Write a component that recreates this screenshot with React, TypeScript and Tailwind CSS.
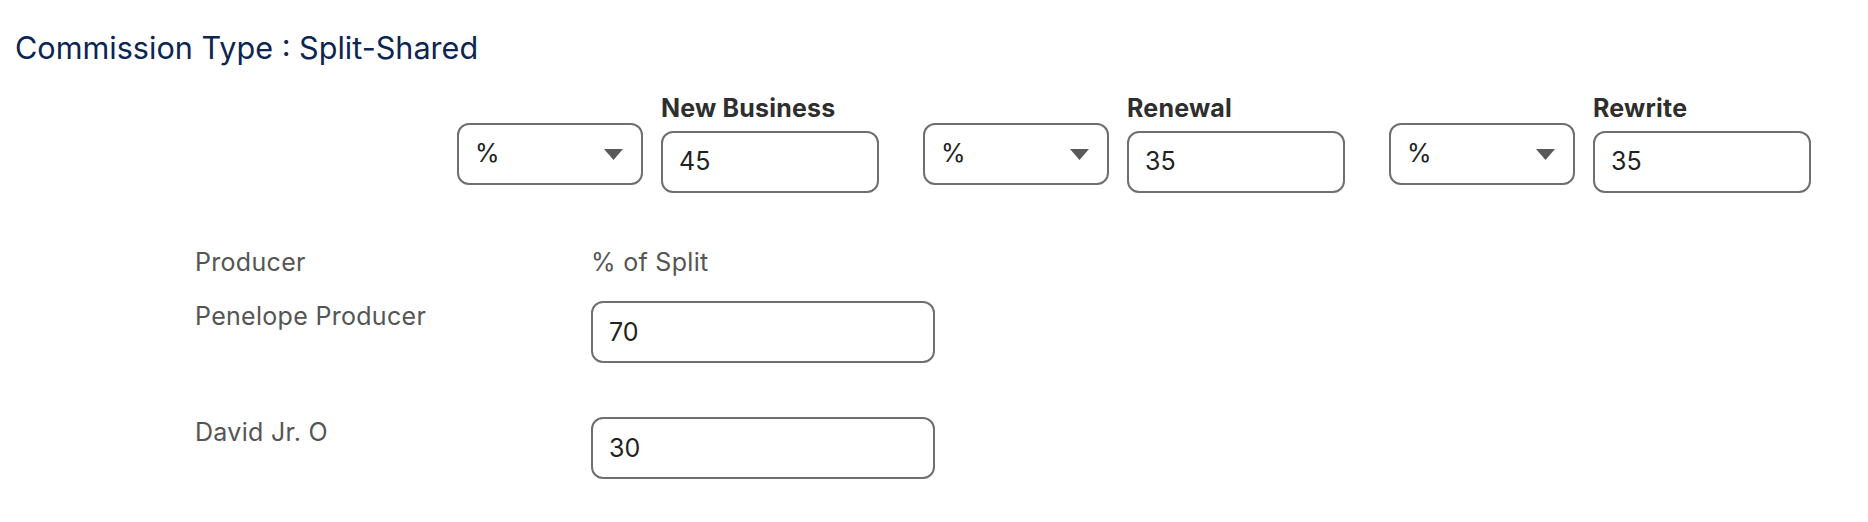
import React from "react";

function Caret() {
  return (
    <svg width="19" height="11" viewBox="0 0 19 11" aria-hidden="true">
      <path d="M0 0 H19 L9.5 11 Z" fill="#595959" />
    </svg>
  );
}

function Group({ label, value }: { label: string; value: string }) {
  return (
    <div className="flex items-end gap-[18px]">
      <div className="mb-[8px] flex h-[62px] w-[186px] items-center justify-between rounded-[12px] border-2 border-[#6f6f6f] pl-[16px] pr-[18px] text-[25px] text-[#222]">
        <span>%</span>
        <Caret />
      </div>
      <div className="flex flex-col">
        <div className="mb-[8px] text-[25px] font-bold leading-[30px] tracking-[0.2px] text-[#2e2e2e]">{label}</div>
        <div className="flex h-[62px] w-[218px] items-center rounded-[12px] border-2 border-[#6f6f6f] pl-[16px] text-[25px] text-[#222]">
          {value}
        </div>
      </div>
    </div>
  );
}

export default function App() {
  const rows = [
    { name: "Penelope Producer", value: "70" },
    { name: "David Jr. O", value: "30" },
  ];
  return (
    <div
      className="min-h-[522px] w-[1868px] bg-white"
      style={{ fontFamily: "Inter, 'Noto Sans', sans-serif" }}
    >
      <div className="pl-[15px] pt-[30px] text-[30.6px] leading-[36px] text-[#0c2552]">
        Commission Type : Split-Shared
      </div>
      <div className="mt-[27px] flex gap-[44px] pl-[457px]">
        <Group label="New Business" value="45" />
        <Group label="Renewal" value="35" />
        <Group label="Rewrite" value="35" />
      </div>
      <div className="mt-[54px] grid grid-cols-[396px_344px] gap-y-[24px] pl-[195px] text-[25px] leading-[30px] tracking-[0.3px] text-[#555]">
        <div>Producer</div>
        <div>% of Split</div>
        {rows.map((r, i) => (
          <React.Fragment key={r.name}>
            <div className={i > 0 ? "mt-[30px]" : ""}>{r.name}</div>
            <div
              className={
                "flex h-[62px] items-center rounded-[12px] border-2 border-[#6f6f6f] pl-[16px] tracking-normal text-[#222] " +
                (i > 0 ? "mt-[30px]" : "")
              }
            >
              {r.value}
            </div>
          </React.Fragment>
        ))}
      </div>
    </div>
  );
}
